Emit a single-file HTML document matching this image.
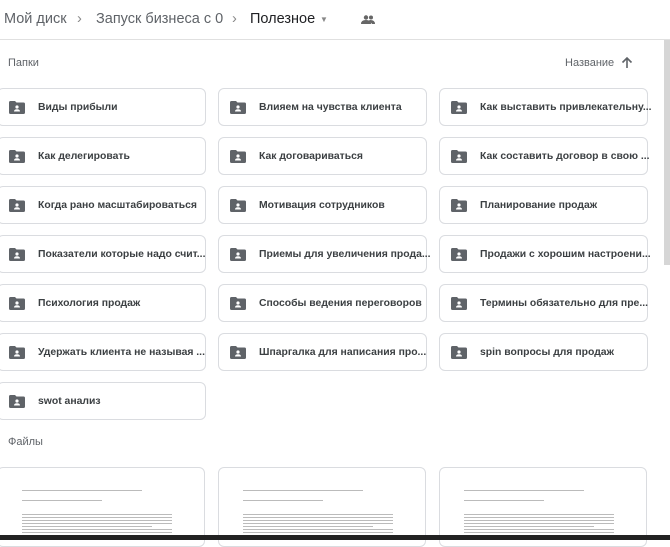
<!DOCTYPE html>
<html><head><meta charset="utf-8"><style>
*{box-sizing:border-box;margin:0;padding:0}
body{width:670px;height:540px;overflow:hidden;background:#fff;font-family:"Liberation Sans",sans-serif;position:relative;color:#3c4043}
.hdr{position:absolute;left:0;top:0;width:670px;height:40px;border-bottom:1px solid #e0e0e0}
.bc{position:absolute;top:11px;font-size:14.5px;color:#5f6368}
.card{position:absolute;width:209px;height:38px;border:1px solid #dadce0;border-radius:6px;background:#fff}
.card svg{position:absolute;left:11px;top:12px}
.card span{position:absolute;left:40px;top:13px;font-size:10.4px;font-weight:bold;color:#3c4043;white-space:nowrap}
.fc{position:absolute;top:467px;width:208px;height:80px;border:1px solid #dadce0;border-radius:6px}
.fc div{position:absolute;left:24px;height:1px;background:#bbb}
</style></head><body>
<div class="hdr">
<span class="bc" style="left:4px">Мой диск</span>
<span class="bc" style="left:77px;color:#888">›</span>
<span class="bc" style="left:96px">Запуск бизнеса с 0</span>
<span class="bc" style="left:232px;color:#888">›</span>
<span class="bc" style="left:250px;color:#202124">Полезное</span>
<span class="bc" style="left:320px;top:15px;font-size:8px;color:#888">▼</span>
<svg style="position:absolute;left:361px;top:15px" width="14" height="9" viewBox="0 0 14 9"><circle cx="5" cy="2.5" r="2.2" fill="#666"/><circle cx="10" cy="2.5" r="2" fill="#666"/><path d="M0 9 Q0 5 5 5 Q10 5 10 9Z M8 5 Q14 4.5 14 9 H11Z" fill="#666"/></svg>
</div>
<div style="position:absolute;left:664px;top:40px;width:6px;height:225px;background:#d6d6d6"></div>
<div style="position:absolute;left:8px;top:57px;font-size:11px;color:#5f6368">Папки</div>
<div style="position:absolute;left:565px;top:57px;font-size:11px;color:#5f6368">Название</div>
<svg style="position:absolute;left:621px;top:56px" width="12" height="13" viewBox="0 0 12 13"><path d="M6 12V2M1.5 6.5L6 2L10.5 6.5" stroke="#5f6368" stroke-width="1.6" fill="none"/></svg>
<div style="position:absolute;left:8px;top:436px;font-size:11px;color:#5f6368">Файлы</div>
<div id="g"></div>
<script>
var t=[["Виды прибыли","Влияем на чувства клиента","Как выставить привлекательну..."],["Как делегировать","Как договариваться","Как составить договор в свою ..."],["Когда рано масштабироваться","Мотивация сотрудников","Планирование продаж"],["Показатели которые надо счит...","Приемы для увеличения прода...","Продажи с хорошим настроени..."],["Психология продаж","Способы ведения переговоров","Термины обязательно для пре..."],["Удержать клиента не называя ...","Шпаргалка для написания про...","spin вопросы для продаж"],["swot анализ"]];
var xs=[-3,218,439],h="";
var ic='<svg width="16" height="13" viewBox="0 0 16 13"><path d="M0 1.5Q0 0 1.5 0H6L7.5 1.5H14.5Q16 1.5 16 3V11.5Q16 13 14.5 13H1.5Q0 13 0 11.5Z" fill="#5f6368"/><circle cx="8" cy="6" r="1.6" fill="#fff"/><path d="M5 10.5Q5 8.2 8 8.2Q11 8.2 11 10.5Z" fill="#fff"/></svg>';
t.forEach(function(r,i){r.forEach(function(s,j){h+='<div class="card" style="left:'+xs[j]+'px;top:'+(88+49*i)+'px">'+ic+'<span>'+s+'</span></div>';});});
xs.forEach(function(x){var l='<div class="fc" style="left:'+x+'px">';[[22,120],[32,80],[46,150],[49,150],[52,150],[55,150],[58,130],[61,150],[64,150]].forEach(function(a){l+='<div style="top:'+a[0]+'px;width:'+a[1]+'px"></div>';});h+=l+'</div>';});
document.getElementById('g').innerHTML=h;
</script>
<div style="position:absolute;left:0;top:535px;width:670px;height:5px;background:#222"></div>
</body></html>
